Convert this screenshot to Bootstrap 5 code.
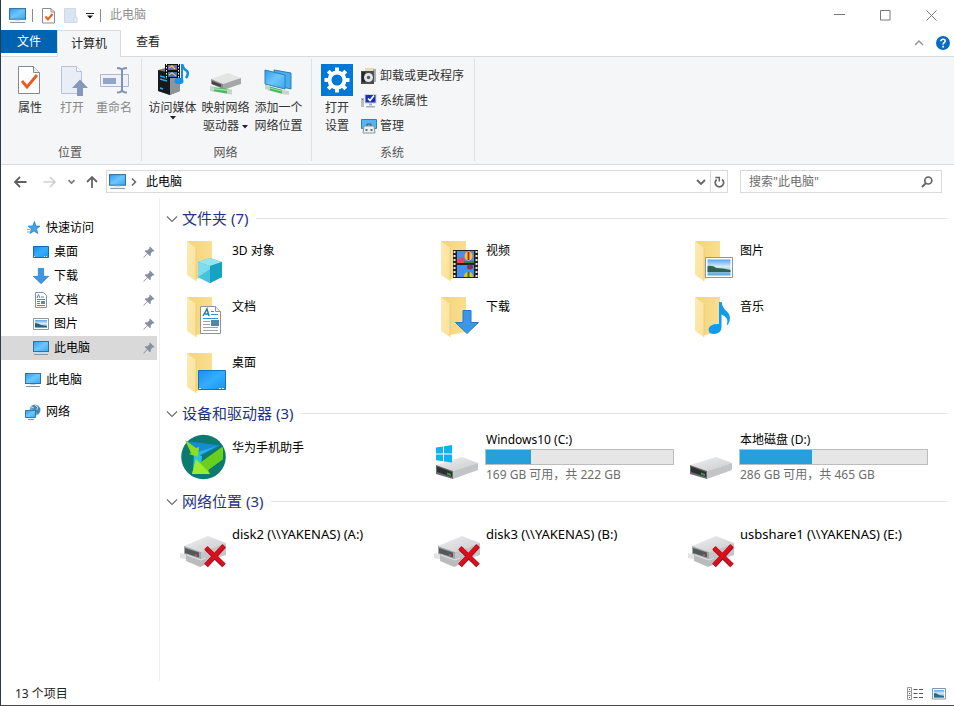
<!DOCTYPE html>
<html lang="zh-CN">
<head>
<meta charset="utf-8">
<meta name="viewport" content="width=device-width, initial-scale=1">
<title>此电脑</title>
<link href="https://cdn.jsdelivr.net/npm/bootstrap@5.3.0/dist/css/bootstrap.min.css" rel="stylesheet">
<style>
body{font-family:"Noto Sans","Noto Sans CJK SC",sans-serif;font-size:12px;line-height:18px;color:#000;background:#fff}
svg{display:block;flex:none}
button{font:inherit;color:inherit;background:none;border:0;padding:0}
a{color:inherit;text-decoration:none}
.explorer{min-height:100vh;border-left:1px solid #2c3a4e;border-bottom:1px solid #3c4a58}
.titlebar{height:30px;padding-left:8px}
.titlebar .tsep{width:1px;height:13px;background:#8a8a8a;margin:0 9px 0 6px}
.titlebar .caption-text{color:#8f8f8f}
.win-btn{width:46px;height:30px}
.tabstrip{height:27px;border-bottom:1px solid #d9dadb}
.tabstrip .file-tab{width:56px;height:23px;background:#0063b1;color:#fff}
.tabstrip .live-tab{width:64px;height:27px;background:#f5f6f7;border:1px solid #d9dadb;border-bottom:0;color:#222}
.tabstrip .plain-tab{width:54px;height:24px;color:#222}
.ribbon{background:#f5f6f7;border-bottom:1px solid #d9dadb;height:108px;color:#333}
.rgroup{border-right:1px solid #dfe0e2;margin:2px 0 3px;padding:0 6px 0 4px}
.rgroup footer{height:20px;line-height:24px;color:#555;text-align:center}
.rbig{width:42px;padding-top:5px;text-align:center}
.rbig.wide{width:53px}
.rbig svg{margin:0 auto 3px}
.rbig .arrow{margin-top:-1px}
.rbig .off{color:#888}
.rsmalls{padding:4px 4px 0 3px}
.rsmall{height:25px;gap:3px}
.navbar-row{height:33px;padding:0 12px 0 12px}
.nav-near{margin-left:11px}
.addr{height:23px;border:1px solid #d9d9d9;padding-left:2px}
.addr .cell-r{border-left:1px solid #d9d9d9;width:17px;height:21px}
.search-box{width:202px;height:23px;border:1px solid #d9d9d9;margin-left:12px;padding:0 8px}
.search-box input{border:0;outline:0;background:none;font:inherit;min-width:0;padding:0}
.search-box input::placeholder{color:#6d6d6d;opacity:1}
.tree{width:159px;padding-top:18px;border-right:1px solid #f0f0f0}
.tree a{height:24px;gap:5px;padding-left:24px;margin-right:2px}
.tree a.sub{padding-left:32px}
.tree a.on{background:#d9d9d9}
.tree .pin{margin-left:auto;margin-right:2px}
.files{padding:9px 7px 0 6px}
.files h2{font-size:15px;line-height:23px;height:23px;color:#1e3287;font-weight:400;margin:0 0 4px;gap:4px}
.files h2.spaced{margin-top:5px}
.files h2::after{content:"";height:1px;background:#e2e2e2;flex:1;margin-left:4px}
.tiles{display:grid;grid-template-columns:repeat(auto-fill,254px);padding-left:14px}
.tile{height:56px;gap:4px;padding-top:4px}
.tile .cap{padding-top:4px}
.tile .cap.low{padding-top:6px}
.tile .cap.unc{font-size:13px}
.tile.disk .cap{padding-top:0;margin-top:-2px}
.disk .progress{width:189px;height:16px;border-radius:0;border:1px solid #bcbcbc;background:#e6e6e6;margin:0 0 1px -1px}
.disk .progress-bar{background:#26a0da}
.disk small{font-size:12px;color:#6d6d6d}
.statusbar{height:24px;padding:1px 8px 0 14px;color:#222}
</style>
<script src="https://cdn.jsdelivr.net/npm/bootstrap@5.3.0/dist/js/bootstrap.bundle.min.js"></script>
</head>
<body>
<svg width="0" height="0" class="position-absolute" aria-hidden="true">
<defs>
<linearGradient id="gScreen" x1="0" y1="0" x2="1" y2="1"><stop offset="0" stop-color="#2f9df0"/><stop offset=".5" stop-color="#6cc6fb"/><stop offset="1" stop-color="#3aa8f2"/></linearGradient>
<linearGradient id="gDesk" x1="0" y1="0" x2="1" y2="1"><stop offset="0" stop-color="#1590f0"/><stop offset=".5" stop-color="#35adfb"/><stop offset="1" stop-color="#1496f4"/></linearGradient>
<linearGradient id="gFold" x1="0" y1="0" x2="1" y2="0"><stop offset="0" stop-color="#f3d27c"/><stop offset="1" stop-color="#fadf8f"/></linearGradient>
<linearGradient id="gFlap" x1="0" y1="0" x2="1" y2="1"><stop offset="0" stop-color="#fdebb2"/><stop offset="1" stop-color="#fbe09a"/></linearGradient>
<linearGradient id="gTop" x1="0" y1="0" x2="1" y2="1"><stop offset="0" stop-color="#f0f0f1"/><stop offset="1" stop-color="#c9cacc"/></linearGradient>
<linearGradient id="gSky" x1="0" y1="0" x2="0" y2="1"><stop offset="0" stop-color="#5ba4ea"/><stop offset=".45" stop-color="#d9ecf8"/><stop offset=".6" stop-color="#a9d3ea"/><stop offset="1" stop-color="#5fa3d0"/></linearGradient>
<symbol id="pc" viewBox="0 0 16 16"><rect x=".5" y="1.500" width="15" height="10" fill="url(#gScreen)" stroke="#33719f"/><path d="M5.500 12h5v1h-5z" fill="#c5d6e2"/><path d="M1 14.500h14" stroke="#7e97a8"/></symbol>
<symbol id="folder" viewBox="0 0 48 48"><path d="M7 3h25v35l-16 3z" fill="url(#gFold)"/><path d="M7 3l9 7v33l-9-6z" fill="url(#gFlap)"/><path d="M16 10v33" stroke="#e8c66c" stroke-width=".6"/></symbol>
<symbol id="hdd" viewBox="0 0 48 48"><path d="M2 32L28 24l16 6-25 8z" fill="url(#gTop)"/><path d="M44 30v7l-25 9v-8z" fill="#c2c4c6"/><path d="M2 32l17 6v8L2 41z" fill="#6a6d6f"/><path d="M3 33.500l15 5.500v5L3 39z" fill="#2e3133"/><path d="M13 39.500l4 1.400v2l-4-1.400z" fill="#37a04a"/></symbol>
<symbol id="netx" viewBox="0 0 48 48"><path d="M4 25L28 15l18 7-25 9z" fill="url(#gTop)"/><path d="M46 22v12l-25 8V31z" fill="#c4c5c7"/><path d="M4 25l17 6v9L4 34z" fill="#a3a5a7"/><path d="M5 27l14 4.500v5L5 32z" fill="#55585a"/><path d="M15 33l2 .7v1.500l-2-.7z" fill="#e05070"/><path d="M0 32l9 2v5l-9-2z" fill="#e2e3e4"/><path d="M6 33l15 5 6-2v7l-7 3-14-6z" fill="#b9bbbd"/><path d="M7 34l14 5 5-2" fill="none" stroke="#e3e4e5"/><path d="M26 27L44 44.500M44 25L26 44.500" stroke="#a30d1c" stroke-width="5"/><path d="M26 26.500L44 44M44 24.500L26 44" stroke="#d8101e" stroke-width="3.800"/></symbol>
<symbol id="pinned" viewBox="0 0 12 12"><path d="M7 .5L11.500 5l-1 .6-1 0L7.700 7.500l.1 2L7 10.300 4.500 7.800 1 11.500.3 11.700.5 11 4 7.300 1.700 5l.8-.8 2 .1L6.400 2.500V1.300z" fill="#84909c"/></symbol>
<symbol id="downarrow" viewBox="0 0 24 24"><path d="M8 .5h8v12h7.500L12 23.500.5 12.500H8z" fill="#3c97e6" stroke="#2478c4"/></symbol>
<symbol id="chev" viewBox="0 0 12 12"><path d="M1 3.500l5 5 5-5" fill="none" stroke="#6e6e6e" stroke-width="1.200"/></symbol>
</defs>
</svg>

<div class="explorer d-flex flex-column">
<header class="titlebar d-flex align-items-center">
  <svg width="17" height="17"><use href="#pc"/></svg>
  <span class="tsep"></span>
  <button type="button" aria-label="属性"><svg width="13" height="17" viewBox="0 0 13 17"><path d="M.5 1.500h8.500l3.500 3.500v11H.5z" fill="#fff" stroke="#8b8b8b"/><path d="M9 1.500V5h3.500" fill="none" stroke="#8b8b8b"/><path d="M3.500 9.500l2.500 3 4.500-5.500" fill="none" stroke="#f05a1a" stroke-width="2"/></svg></button>
  <button type="button" class="ms-2" aria-label="新建文件夹"><svg width="15" height="17" viewBox="0 0 15 17"><path d="M1.500 1.500h11v14h-11z" fill="#dbe4f0" stroke="#cfdae9"/><path d="M11 10h3v5.500h-3z" fill="#e9eff6" stroke="#cad6e6"/></svg></button>
  <button type="button" class="ms-2" aria-label="自定义快速访问工具栏"><svg width="8" height="8" viewBox="0 0 8 8"><path d="M0 2.500h8" stroke="#222"/><path d="M1 4.500h6l-3 3z" fill="#111"/></svg></button>
  <span class="tsep"></span>
  <span class="caption-text">此电脑</span>
  <div class="ms-auto d-flex">
    <button type="button" class="win-btn d-flex align-items-center justify-content-center" aria-label="最小化"><svg width="11" height="11" viewBox="0 0 11 11"><path d="M0 4.500h11" stroke="#777"/></svg></button>
    <button type="button" class="win-btn d-flex align-items-center justify-content-center" aria-label="最大化"><svg width="11" height="11" viewBox="0 0 11 11"><path d="M.5.500h9.500v9.500H.5z" fill="none" stroke="#777"/></svg></button>
    <button type="button" class="win-btn d-flex align-items-center justify-content-center" aria-label="关闭"><svg width="11" height="11" viewBox="0 0 11 11"><path d="M.5.500l10 10M10.500.500l-10 10" stroke="#777"/></svg></button>
  </div>
</header>

<nav class="tabstrip d-flex" aria-label="功能区选项卡">
  <a href="#" class="file-tab d-flex align-items-center justify-content-center">文件</a>
  <a href="#" class="live-tab d-flex align-items-center justify-content-center" aria-current="page">计算机</a>
  <a href="#" class="plain-tab d-flex align-items-center justify-content-center">查看</a>
  <div class="ms-auto d-flex align-items-center pe-1 gap-2">
    <button type="button" class="me-1" aria-label="最小化功能区"><svg width="10" height="10" viewBox="0 0 10 10"><path d="M1 7l4-4 4 4" fill="none" stroke="#999" stroke-width="1.500"/></svg></button>
    <button type="button" aria-label="帮助"><svg width="14" height="14" viewBox="0 0 14 14"><circle cx="7" cy="7" r="7" fill="#0a6ac4"/><path d="M4.900 5.300C5 2.600 9.200 2.700 9.200 5 9.200 6.600 7 6.600 7 8.600" fill="none" stroke="#fff" stroke-width="1.600"/><path d="M6.200 9.800h1.700v1.600H6.200z" fill="#fff"/></svg></button>
  </div>
</nav>

<section class="ribbon d-flex" aria-label="计算机">
  <div class="rgroup d-flex flex-column">
    <div class="d-flex flex-grow-1">
      <button type="button" class="rbig d-flex flex-column align-items-center ms-1"><svg width="32" height="32" viewBox="0 0 32 32"><path d="M4.500 2.500h15l6 6v21h-21z" fill="#fff" stroke="#85898d"/><path d="M19.500 2.500v6h6" fill="#eee" stroke="#85898d"/><path d="M8 17l5 6 10-12" fill="none" stroke="#ee5a1c" stroke-width="2.800"/></svg><span>属性</span></button>
      <button type="button" class="rbig d-flex flex-column align-items-center" disabled><svg width="32" height="32" viewBox="0 0 32 32"><path d="M5.500 2.500h15l5 5v22h-20z" fill="#e9eef6" stroke="#b5c3da"/><path d="M20.500 2.500v5h5" fill="#f8fafc" stroke="#b5c3da"/><path d="M24 15.500l8 8.500h-5v8h-6v-8h-5z" fill="#8498bb"/></svg><span class="off">打开</span></button>
      <button type="button" class="rbig d-flex flex-column align-items-center" disabled><svg width="32" height="32" viewBox="0 0 32 32"><path d="M2.500 10.500h28v12h-28z" fill="#eef2f8" stroke="#a9b9d2"/><path d="M5 14h13v6H5z" fill="#93a5c6"/><path d="M19 4q5 0 5 2.500v19q0 3-5 3M29 4q-5 0-5 2.500v19q0 3 5 3" fill="none" stroke="#8093b0" stroke-width="2"/></svg><span class="off">重命名</span></button>
    </div>
    <footer>位置</footer>
  </div>
  <div class="rgroup d-flex flex-column">
    <div class="d-flex flex-grow-1">
      <button type="button" class="rbig wide d-flex flex-column align-items-center"><svg width="32" height="32" viewBox="0 0 32 32"><path d="M1 6l11-3 11 4v20l-10 4L1 27z" fill="#777b80"/><path d="M1 6l12 3v22L1 27z" fill="#16191d"/><path d="M13 9l10-3v21l-10 4z" fill="#909498"/><path d="M3 12l7 2M3 15l7 2M3 24l3 1" stroke="#2fa7ee" stroke-width="1.500"/><path d="M8 0h15v14H8z" fill="#111"/><path d="M11 1h9v5h-9z" fill="#6863d8"/><path d="M11 8h9v5h-9z" fill="#3b6ac4"/><path d="M12 4l3-2 3 3M12 11l3-2 4 3" stroke="#f3c22d" stroke-width="1.500" fill="none"/><path d="M9.500 0v14M21.500 0v14" stroke="#fff" stroke-dasharray="1.500 1.500"/><path d="M25 0v15" stroke="#168ce0" stroke-width="2"/><path d="M25 0q1 5 5 7 2 3-1 7" fill="none" stroke="#168ce0" stroke-width="2.500"/><ellipse cx="22" cy="17" rx="4.500" ry="3.300" fill="#1793ea"/></svg><span>访问媒体</span><svg width="6" height="4" viewBox="0 0 6 4" class="arrow"><path d="M0 0h6L3 3.500z" fill="#222"/></svg></button>
      <button type="button" class="rbig wide d-flex flex-column align-items-center"><svg width="32" height="32" viewBox="0 0 32 32"><path d="M1 15l17-6 13 5-18 6z" fill="#e4e4e3"/><path d="M31 14v6l-18 6v-6z" fill="#a5a6a7"/><path d="M1 15l12 5v5L1 20z" fill="#8a8c8d"/><path d="M2 17l9 3.500v2.500L2 20z" fill="#444"/><path d="M2 23l17 2v5L2 27z" fill="#49b765"/><path d="M2 24.500l17 2" stroke="#97e2a3" stroke-width="1.500"/><path d="M0 22l4 .5v5L0 27zM17 25l5 .5v5L17 30z" fill="#c5d5cb"/></svg><span>映射网络<br>驱动器 <svg width="6" height="4" viewBox="0 0 6 4" class="d-inline-block m-0 align-middle"><path d="M0 0h6L3 3.500z" fill="#222"/></svg></span></button>
      <button type="button" class="rbig wide d-flex flex-column align-items-center"><svg width="32" height="32" viewBox="0 0 32 32"><path d="M11 6l17 3v16l-17-4z" fill="#48acf0" stroke="#2e7db7"/><path d="M2 6l20 5v14L2 20z" fill="url(#gScreen)" stroke="#2e7db7"/><path d="M5 22l15 4v4L5 26z" fill="#45b462"/><path d="M5 23.500l15 4" stroke="#9be3a8"/><path d="M2 21l5 1v4l-5-1zM19 26l7 1v4l-7-1z" fill="#c5d5cb"/></svg><span>添加一个<br>网络位置</span></button>
    </div>
    <footer>网络</footer>
  </div>
  <div class="rgroup d-flex flex-column">
    <div class="d-flex flex-grow-1">
      <button type="button" class="rbig d-flex flex-column align-items-center"><svg width="32" height="32" viewBox="0 0 32 32"><path d="M0 0h32v32H0z" fill="#0078d7"/><circle cx="16" cy="16" r="7.500" fill="none" stroke="#fff" stroke-width="4"/><path d="M16 3.500v5M16 23.500v5M3.500 16h5M23.500 16h5M7.200 7.200l3.500 3.500M21.300 21.300l3.500 3.500M24.800 7.200l-3.500 3.500M10.700 21.300l-3.500 3.500" stroke="#fff" stroke-width="4"/></svg><span>打开<br>设置</span></button>
      <div class="rsmalls d-flex flex-column">
        <button type="button" class="rsmall d-flex align-items-center"><svg width="16" height="16" viewBox="0 0 16 16"><path d="M4 0h9v4H4z" fill="#e8d9b8"/><path d="M12 1h3v13h-3z" fill="#a8adb0"/><path d="M0 3h13v13H0z" fill="#4a4d50"/><path d="M1 4h3v10H1z" fill="#25282a"/><circle cx="7.500" cy="9.500" r="4.500" fill="#e3e5e6"/><circle cx="7.500" cy="9.500" r="1.700" fill="#55585b"/></svg><span>卸载或更改程序</span></button>
        <button type="button" class="rsmall d-flex align-items-center"><svg width="16" height="16" viewBox="0 0 16 16"><path d="M0 5h3v9H0z" fill="#b9bec4"/><path d="M1 6.500h1" stroke="#566"/><path d="M3.500 1h12v9.500h-12z" fill="#cfd3da"/><path d="M4.500 2h10v7.500h-10z" fill="#1b30b5"/><path d="M7 5.500l2 2 4-5" fill="none" stroke="#fff" stroke-width="1.700"/><path d="M8 10.500h3v2H8zM5 13h9v1.500H5z" fill="#a8afb8"/></svg><span>系统属性</span></button>
        <button type="button" class="rsmall d-flex align-items-center"><svg width="16" height="16" viewBox="0 0 16 16"><path d="M.5 1.500h15v9H.5z" fill="#52b4f3" stroke="#3480b0"/><path d="M3 8h10l1 7H2z" fill="#edf0f1" stroke="#8b969d"/><path d="M6 8V6h4v2" fill="none" stroke="#4a5860"/><path d="M4.500 12h2M9.500 12h2" stroke="#444" stroke-width="1.500"/></svg><span>管理</span></button>
      </div>
    </div>
    <footer>系统</footer>
  </div>
</section>

<div class="navbar-row d-flex align-items-center">
  <button type="button" aria-label="返回"><svg width="14" height="12" viewBox="0 0 14 12"><path d="M13.500 6H2M7 1L2 6l5 5" fill="none" stroke="#5f5f5f" stroke-width="1.800"/></svg></button>
  <button type="button" class="ms-3" aria-label="前进"><svg width="14" height="12" viewBox="0 0 14 12"><path d="M.5 6H12M7 1l5 5-5 5" fill="none" stroke="#d0d0d0" stroke-width="1.600"/></svg></button>
  <button type="button" class="nav-near" aria-label="最近位置"><svg width="7" height="7" viewBox="0 0 7 7"><path d="M.5 2l3 3 3-3" fill="none" stroke="#777" stroke-width="1.600"/></svg></button>
  <button type="button" class="nav-near me-2" aria-label="上移"><svg width="12" height="14" viewBox="0 0 12 14"><path d="M6 13V2M1 7l5-5 5 5" fill="none" stroke="#666" stroke-width="1.800"/></svg></button>
  <div class="addr flex-grow-1 d-flex align-items-center">
    <svg width="17" height="17" class="me-1"><use href="#pc"/></svg>
    <svg width="8" height="8" viewBox="0 0 8 8"><path d="M2 .5L5.500 4 2 7.500" fill="none" stroke="#666" stroke-width="1.500"/></svg>
    <a href="#" class="ms-2">此电脑</a>
    <button type="button" class="ms-auto me-1" aria-label="以前的位置"><svg width="10" height="8" viewBox="0 0 10 8"><path d="M1 2l4 4 4-4" fill="none" stroke="#666" stroke-width="1.800"/></svg></button>
    <button type="button" class="cell-r d-flex align-items-center justify-content-center" aria-label="刷新"><svg width="11" height="12" viewBox="0 0 11 12"><path d="M2.600 3.500A4.200 4.200 0 1 0 8 3.300" fill="none" stroke="#666" stroke-width="1.700"/><path d="M1.300 1.500h4v4" fill="none" stroke="#666" stroke-width="1.500"/></svg></button>
  </div>
  <div class="search-box d-flex align-items-center">
    <input type="search" class="flex-grow-1" placeholder='搜索"此电脑"' aria-label="搜索此电脑">
    <svg width="12" height="12" viewBox="0 0 12 12"><circle cx="7.300" cy="4.500" r="3.500" fill="none" stroke="#666" stroke-width="1.700"/><path d="M5 7L1 11" stroke="#666" stroke-width="2"/></svg>
  </div>
</div>

<div class="d-flex flex-grow-1">
  <nav class="tree flex-shrink-0" aria-label="导航窗格">
    <a href="#" class="d-flex align-items-center"><svg width="16" height="16" viewBox="0 0 16 16"><path d="M9.500 1.500l1.300 4.500 4.200.2-3.500 2.700 1.200 4.600-3.700-2.600-4 2.600 1.500-4.600L3 6.200l4.700-.2z" fill="#41a4ea" stroke="#1f82cf" stroke-width=".8"/><path d="M2 9.500h3M2 12h3" stroke="#6bb4ea"/></svg><span>快速访问</span></a>
    <a href="#" class="sub d-flex align-items-center"><svg width="16" height="16" viewBox="0 0 16 16"><path d="M.5 2.500h15v11H.5z" fill="url(#gDesk)" stroke="#1668a8"/><path d="M1 12.500h2M11 12.500h4" stroke="#d6efff" stroke-dasharray="1 1"/></svg><span>桌面</span><svg class="pin" width="12" height="12"><use href="#pinned"/></svg></a>
    <a href="#" class="sub d-flex align-items-center"><svg width="16" height="16"><use href="#downarrow"/></svg><span>下载</span><svg class="pin" width="12" height="12"><use href="#pinned"/></svg></a>
    <a href="#" class="sub d-flex align-items-center"><svg width="16" height="16" viewBox="0 0 16 16"><path d="M2.500.500h8l3 3v12h-11z" fill="#fff" stroke="#87939c"/><path d="M4 6l1.500-3.500L7 6M8 5h3M4 7.500h8M4 9.500h3M4 11.500h3M4 13.500h8" stroke="#3f8dc8" fill="none"/><path d="M8 9h4v3H8z" fill="#5c8ea6"/></svg><span>文档</span><svg class="pin" width="12" height="12"><use href="#pinned"/></svg></a>
    <a href="#" class="sub d-flex align-items-center"><svg width="16" height="16" viewBox="0 0 16 16"><path d="M.5 2.500h15v11H.5z" fill="#fff" stroke="#8c98a4"/><path d="M2 4h12v8H2z" fill="url(#gSky)"/><path d="M2 7q3 0 6 2l6 1v1H2z" fill="#2d5f74"/></svg><span>图片</span><svg class="pin" width="12" height="12"><use href="#pinned"/></svg></a>
    <a href="#" class="sub on d-flex align-items-center" aria-current="true"><svg width="16" height="16"><use href="#pc"/></svg><span>此电脑</span><svg class="pin" width="12" height="12"><use href="#pinned"/></svg></a>
    <a href="#" class="mt-2 d-flex align-items-center"><svg width="16" height="16"><use href="#pc"/></svg><span>此电脑</span></a>
    <a href="#" class="mt-2 d-flex align-items-center"><svg width="16" height="16" viewBox="0 0 16 16"><circle cx="10" cy="6" r="5.500" fill="#6fa9cf"/><path d="M8 1q-2 4 1 6l4 3q3-3 2-6z" fill="#4585b4"/><path d="M10 1q4 2 2 5M6 3l3 1" stroke="#b9dbee" fill="none"/><path d="M.5 6.500h10v7H.5z" fill="url(#gScreen)" stroke="#2f79ad"/><path d="M3 15.500h6" stroke="#7295ab"/></svg><span>网络</span></a>
  </nav>

  <main class="files flex-grow-1">
    <h2 class="d-flex align-items-center"><svg width="12" height="12"><use href="#chev"/></svg>文件夹 (7)</h2>
    <div class="tiles">
      <a href="#" class="tile d-flex"><svg width="48" height="48" viewBox="0 0 48 48"><use href="#folder"/><path d="M30 20l12 4v15l-12 6-12-6V24z" fill="#35b8d4"/><path d="M18 24l12-4 12 4-12 4z" fill="#96e4ee"/><path d="M18 24l12 4v17l-12-6z" fill="#7fdcea"/><path d="M30 28l12-4v15l-12 6z" fill="#16a3c2"/><path d="M18 39l12-8v14z" fill="#43c4dc"/></svg><span class="cap">3D 对象</span></a>
      <a href="#" class="tile d-flex"><svg width="48" height="48" viewBox="0 0 48 48"><use href="#folder"/><path d="M19 12h25v28H19z" fill="#222"/><path d="M20.500 13v27M42.500 13v27" stroke="#e7e7e7" stroke-width="2" stroke-dasharray="2 2"/><path d="M23 13h17v12H23z" fill="#4b8de6"/><path d="M23 27h17v12H23z" fill="#3f91ec"/><path d="M23 22q4-4 8-1v4h-8z" fill="#d55158"/><path d="M30 23h10v2H30z" fill="#2d8a48"/><ellipse cx="34.500" cy="18" rx="4" ry="4.500" fill="#f4c522"/><path d="M34.500 14v8" stroke="#b32038" stroke-width="1.800"/><ellipse cx="36" cy="29" rx="3" ry="2.500" fill="#8f2d4c"/><path d="M30 39q0-5 4.500-5t4.500 5z" fill="#f1bc22"/><path d="M34.500 34v5" stroke="#1e7e3c" stroke-width="2"/></svg><span class="cap">视频</span></a>
      <a href="#" class="tile d-flex"><svg width="48" height="48" viewBox="0 0 48 48"><use href="#folder"/><path d="M17.500 19.500h27v20h-27z" fill="#fff" stroke="#8798ad"/><path d="M19.500 21.500h23v16h-23z" fill="url(#gSky)"/><path d="M19.500 28q5-1 9 2 6 0 14 2v2h-23z" fill="#2f6350"/></svg><span class="cap">图片</span></a>
      <a href="#" class="tile d-flex"><svg width="48" height="48" viewBox="0 0 48 48"><use href="#folder"/><path d="M20.500 12.500h15l5 5v22h-20z" fill="#fff" stroke="#8c9499"/><path d="M35.500 12.500v5h5" fill="#eee" stroke="#8c9499"/><path d="M23 22l4-7 2 7M25 20h4" stroke="#1d7bc8" stroke-width="1.500" fill="none"/><path d="M31 17.500h3M31 20.500h7M23 24.500h15" stroke="#3a8ccc"/><path d="M23 27.500h7M23 30.500h7M23 33.500h15M23 36.500h15" stroke="#9aa3a9"/><path d="M31 26h8v6h-8z" fill="#4d88aa"/></svg><span class="cap">文档</span></a>
      <a href="#" class="tile d-flex"><svg width="48" height="48" viewBox="0 0 48 48"><use href="#folder"/><use href="#downarrow" x="21" y="16" width="24" height="24"/></svg><span class="cap">下载</span></a>
      <a href="#" class="tile d-flex"><svg width="48" height="48" viewBox="0 0 48 48"><use href="#folder"/><path d="M31 8h2.500q1 6 5.500 9.500 5.500 5 1 13-.8 1-1 0 2-7-5.500-10V33q0 6-7 7-6 0-6-4.500 1-6 10.500-5.500z" fill="#109bec"/></svg><span class="cap">音乐</span></a>
      <a href="#" class="tile d-flex"><svg width="48" height="48" viewBox="0 0 48 48"><use href="#folder"/><path d="M18.500 20.500h27v19h-27z" fill="url(#gDesk)" stroke="#1472bd"/><path d="M19 38.500h3M39 38.500h6" stroke="#d9f1ff" stroke-dasharray="2 1"/></svg><span class="cap">桌面</span></a>
    </div>
    <h2 class="d-flex align-items-center"><svg width="12" height="12"><use href="#chev"/></svg>设备和驱动器 (3)</h2>
    <div class="tiles">
      <a href="#" class="tile d-flex"><svg width="48" height="48" viewBox="0 0 48 48"><circle cx="23.500" cy="24" r="22.300" fill="#0c7a70"/><path d="M6 8l34 4.500-19 10z" fill="#168bd3"/><path d="M37 13L20 22l-4 8 2-11z" fill="#29b5e8"/><path d="M14 20l8 3-1 10-8 5z" fill="#22c4ef"/><path d="M5 7l11 8 3-1-1 10-9-3 2-1z" fill="#8be01e"/><path d="M43 14v12L28 37l2 4-18 0 4-15 4 4z" fill="#7ddc12"/><path d="M20 30L28 37l15-11-1-12z" fill="#69cf1d"/><path d="M16 26l14 15H12z" fill="#9aec2c"/></svg><span class="cap low">华为手机助手</span></a>
      <a href="#" class="tile disk d-flex"><svg width="48" height="48" viewBox="0 0 48 48"><use href="#hdd"/><path d="M2 14.500l7-1v7H2zM10 13.300l8-1.300v8.500h-8zM2 21.500h7v6.800l-7-1zM10 21.500h8v8l-8-1.100z" fill="#0cb5f0"/></svg><span class="cap"><span class="d-block">Windows10 (C:)</span><span class="progress" role="progressbar" aria-label="C: 已用空间" aria-valuenow="24" aria-valuemin="0" aria-valuemax="100"><span class="progress-bar" style="width:24%"></span></span><small class="d-block">169 GB 可用，共 222 GB</small></span></a>
      <a href="#" class="tile disk d-flex"><svg width="48" height="48"><use href="#hdd"/></svg><span class="cap"><span class="d-block">本地磁盘 (D:)</span><span class="progress" role="progressbar" aria-label="D: 已用空间" aria-valuenow="38" aria-valuemin="0" aria-valuemax="100"><span class="progress-bar" style="width:38.5%"></span></span><small class="d-block">286 GB 可用，共 465 GB</small></span></a>
    </div>
    <h2 class="spaced d-flex align-items-center"><svg width="12" height="12"><use href="#chev"/></svg>网络位置 (3)</h2>
    <div class="tiles">
      <a href="#" class="tile d-flex"><svg width="48" height="48"><use href="#netx"/></svg><span class="cap unc">disk2 (\\YAKENAS) (A:)</span></a>
      <a href="#" class="tile d-flex"><svg width="48" height="48"><use href="#netx"/></svg><span class="cap unc">disk3 (\\YAKENAS) (B:)</span></a>
      <a href="#" class="tile d-flex"><svg width="48" height="48"><use href="#netx"/></svg><span class="cap unc">usbshare1 (\\YAKENAS) (E:)</span></a>
    </div>
  </main>
</div>

<footer class="statusbar d-flex align-items-center">
  <span>13 个项目</span>
  <button type="button" class="ms-auto" aria-label="详细信息"><svg width="17" height="13" viewBox="0 0 17 13"><path d="M.5.500h4v4h-4zM.5 4.500h4v4h-4zM.5 8.500h4v4h-4z" fill="#fff" stroke="#999"/><path d="M2 2.500h1M2 6.500h1M2 10.500h1M6.500 2.500h4M12 2.500h4M6.500 6.500h4M12 6.500h4M6.500 10.500h4M12 10.500h4" stroke="#555"/></svg></button>
  <button type="button" class="ms-2" aria-label="大图标"><svg width="14" height="12" viewBox="0 0 14 12"><path d="M.5.500h13v10.500H.5z" fill="#fff" stroke="#8b93a0"/><path d="M2 2h10v7.500H2z" fill="url(#gSky)"/><path d="M2 5q3 0 5 2l5 1v1.500H2z" fill="#2d6a7c"/></svg></button>
</footer>
</div>
</body>
</html>
